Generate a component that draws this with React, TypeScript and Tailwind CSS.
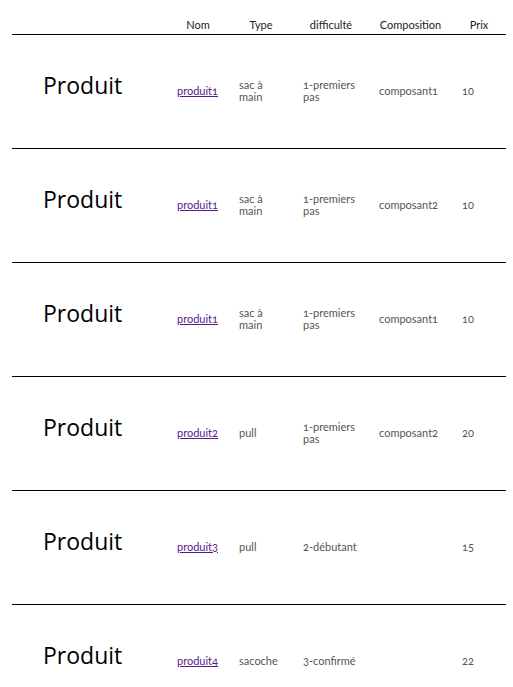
import React from "react";

type Row = { nom: string; type: string; diff: string; comp: string; prix: string };

const rows: Row[] = [
  { nom: "produit1", type: "sac à main", diff: "1-premiers pas", comp: "composant1", prix: "10" },
  { nom: "produit1", type: "sac à main", diff: "1-premiers pas", comp: "composant2", prix: "10" },
  { nom: "produit1", type: "sac à main", diff: "1-premiers pas", comp: "composant1", prix: "10" },
  { nom: "produit2", type: "pull", diff: "1-premiers pas", comp: "composant2", prix: "20" },
  { nom: "produit3", type: "pull", diff: "2-débutant", comp: "", prix: "15" },
  { nom: "produit4", type: "sacoche", diff: "3-confirmé", comp: "", prix: "22" },
];

export default function App() {
  return (
    <div
      className="w-[513px] h-[687px] overflow-hidden bg-white pl-3 pr-[7px] oldstyle-nums"
      style={{ fontFamily: "Lato, 'Open Sans', sans-serif" }}
    >
      <div className="flex items-end h-[35px] border-b border-black pb-[3px] text-[11px] leading-[12px] text-[#222]">
        <div className="w-[155px] shrink-0" />
        <div className="w-[62px] shrink-0 px-[10px] text-center">Nom</div>
        <div className="w-[64px] shrink-0 px-[10px] text-center">Type</div>
        <div className="w-[76px] shrink-0 px-[10px] text-center">difficulté</div>
        <div className="w-[83px] shrink-0 px-[10px] text-center">Composition</div>
        <div className="w-[54px] shrink-0 px-[10px] text-center">Prix</div>
      </div>
      {rows.map((r, i) => (
        <div
          key={i}
          className={`flex items-center h-[114px] pb-[2px] text-[11px] leading-[12px] text-[#555] ${
            i < rows.length - 1 ? "border-b border-black" : ""
          }`}
        >
          <div className="w-[155px] shrink-0 pl-[31px]">
            <span
              className="block text-[23px] leading-[28px] text-black mb-[12px]"
              style={{ fontFamily: "'Open Sans', sans-serif" }}
            >
              Produit
            </span>
          </div>
          <div className="w-[62px] shrink-0 px-[10px]">
            <a href="#" className="underline text-[#551a8b]">
              {r.nom}
            </a>
          </div>
          <div className="w-[64px] shrink-0 px-[10px]">{r.type}</div>
          <div className="w-[76px] shrink-0 px-[10px]">{r.diff}</div>
          <div className="w-[83px] shrink-0 px-[10px]">{r.comp}</div>
          <div className="w-[54px] shrink-0 px-[10px]">{r.prix}</div>
        </div>
      ))}
    </div>
  );
}
